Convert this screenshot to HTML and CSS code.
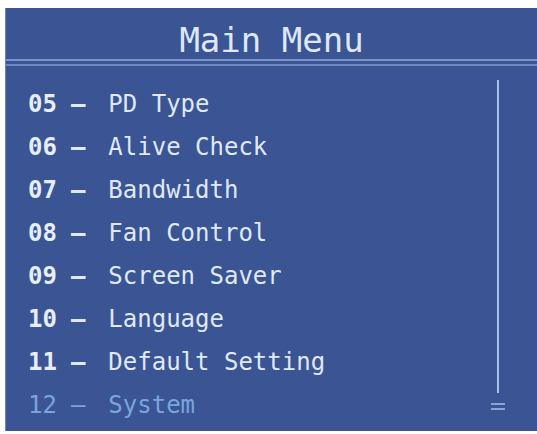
FILE: index.html
```html
<!DOCTYPE html>
<html lang="en">
<head>
  <meta charset="UTF-8" />
  <meta name="viewport" content="width=device-width, initial-scale=1.0"/>
  <title>Main Menu</title>
  <link rel="stylesheet" href="styles.css">
</head>
<body>

  <div class="osd">
    <!-- Title bar -->
    <div class="osd-head">
      <div class="osd-title">Main Menu</div>
      <div class="rule"></div>
    </div>

    <div class="menu">
      <ul class="items">
        <li><span class="num">05</span><span class="dash">–</span><span class="label">PD Type</span></li>
        <li><span class="num">06</span><span class="dash">–</span><span class="label">Alive Check</span></li>
        <li><span class="num">07</span><span class="dash">–</span><span class="label">Bandwidth</span></li>
        <li><span class="num">08</span><span class="dash">–</span><span class="label">Fan Control</span></li>
        <li><span class="num">09</span><span class="dash">–</span><span class="label">Screen Saver</span></li>
        <li><span class="num">10</span><span class="dash">–</span><span class="label">Language</span></li>
        <li><span class="num">11</span><span class="dash">–</span><span class="label">Default Setting</span></li>
        <li class="active"><span class="num">12</span><span class="dash">–</span><span class="label">System</span></li>
      </ul>

      <!-- Scroll indicator -->
      <div class="scroll">
        <div class="track"></div>
        <div class="thumb"></div>
      </div>
    </div>
  </div>

</body>
</html>
```

FILE: styles.css
```css
body {
  margin: 0;
  background: #fff;
  font-family: "DejaVu Sans Mono", "Liberation Mono", monospace;
}

.osd {
  margin: 8px 0 0 5px;
  width: 532px;
  height: 423px;
  box-sizing: border-box;
  background: #3b5493;
  border-left: 1px solid #6d84b8;
  color: #dfe9f7;
  display: flex;
  flex-direction: column;
}

.osd-head {
  padding-top: 16px;
}

.osd-title {
  font-size: 34px;
  line-height: 32px;
  text-align: center;
  color: #dde8f8;
}

.rule {
  margin-top: 3px;
  height: 3px;
  border-top: 2px solid #7c94c9;
  border-bottom: 2px solid #6f88bf;
}

.menu {
  flex: 1;
  display: flex;
}

.items {
  flex: 1;
  list-style: none;
  margin: 0;
  padding: 17px 0 0 22px;
}

.items li {
  display: flex;
  align-items: baseline;
  font-size: 24px;
  line-height: 43px;
  white-space: nowrap;
}

.num {
  font-weight: bold;
  color: #e6eef9;
}

.dash {
  font-weight: bold;
  margin-left: 14px;
}

.label {
  margin-left: 23px;
}

.items li.active {
  color: #78a6dc;
}

.items li.active .num,
.items li.active .dash {
  font-weight: normal;
  color: #78a6dc;
}

.scroll {
  width: 16px;
  margin-right: 31px;
  padding: 14px 0 21px;
  display: flex;
  flex-direction: column;
  align-items: center;
}

.track {
  flex: 1;
  width: 2px;
  background: #a9c1ea;
}

.thumb {
  margin-top: 10px;
  width: 14px;
  height: 3px;
  border-top: 2px solid #8aa4d6;
  border-bottom: 2px solid #8aa4d6;
}
```
